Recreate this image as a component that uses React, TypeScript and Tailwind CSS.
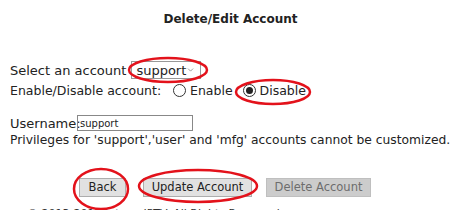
import { ChevronDown } from "lucide-react";

function Radio({ checked, label }: { checked?: boolean; label: string }) {
  return (
    <label className="flex items-center gap-[4px]">
      <span className="flex h-[13px] w-[13px] items-center justify-center rounded-full border border-[#333] bg-white">
        {checked && <span className="h-[7px] w-[7px] rounded-full bg-[#222]" />}
      </span>
      <span>{label}</span>
    </label>
  );
}

export default function App() {
  return (
    <div className="relative h-[210px] w-[461px] overflow-hidden bg-white font-['DejaVu_Sans',sans-serif] text-[13px] text-[#222]">
      <h1 className="pt-[12px] text-center text-[12px] font-bold leading-[15px]">Delete/Edit Account</h1>

      <div className="mt-[34px] flex flex-col pl-[10px] leading-[17px]">
        <div className="flex h-[18px] items-center gap-[5px]">
          <span>Select an account</span>
          <div className="flex h-[18px] w-[70px] items-center justify-between border border-[#999] bg-white pl-[4px] pr-[5px]">
            <span>support</span>
            <ChevronDown className="h-[10px] w-[10px] text-[#555]" strokeWidth={1.5} />
          </div>
        </div>

        <div className="mt-[2px] flex h-[18px] items-center text-[12.5px]">
          <span className="w-[163px]">Enable/Disable account:</span>
          <Radio label="Enable" />
          <span className="w-[10px]" />
          <Radio checked label="Disable" />
        </div>

        <div className="mt-[15px] flex h-[18px] items-center">
          <span className="w-[67px]">Username:</span>
          <div className="flex h-[16px] w-[116px] items-center border border-[#888] pl-[2px] text-[10px]">
            support
          </div>
        </div>

        <p className="h-[17px] text-[12.3px]">Privileges for 'support','user' and 'mfg' accounts cannot be customized.</p>
      </div>

      <div className="mt-[29px] flex items-center pl-[79px]">
        <button className="h-[19px] w-[47px] border border-[#adadad] bg-[#e1e1e1] text-[11.5px] leading-none">Back</button>
        <button className="ml-[17px] h-[19px] w-[109px] border border-[#adadad] bg-[#e1e1e1] text-[11.5px] leading-none">
          Update Account
        </button>
        <button className="ml-[14px] h-[19px] w-[105px] border border-[#bfbfbf] bg-[#cccccc] text-[11.5px] leading-none text-[#6d6d6d]">
          Delete Account
        </button>
      </div>

      <p className="mt-[9px] pl-[27px] text-[11px] leading-[15px] text-[#333]">© 2013-2017 Inteno IPTV. All Rights Reserved.</p>

      <svg className="pointer-events-none absolute left-0 top-0" width="461" height="210">
        <g fill="none" stroke="#e3121b" strokeWidth="2.5">
          <ellipse cx="168" cy="70" rx="39" ry="12" />
          <ellipse cx="273" cy="92" rx="37" ry="12" />
          <ellipse cx="101" cy="189" rx="27" ry="20" />
          <ellipse cx="198" cy="186" rx="59" ry="16" />
        </g>
      </svg>
    </div>
  );
}
